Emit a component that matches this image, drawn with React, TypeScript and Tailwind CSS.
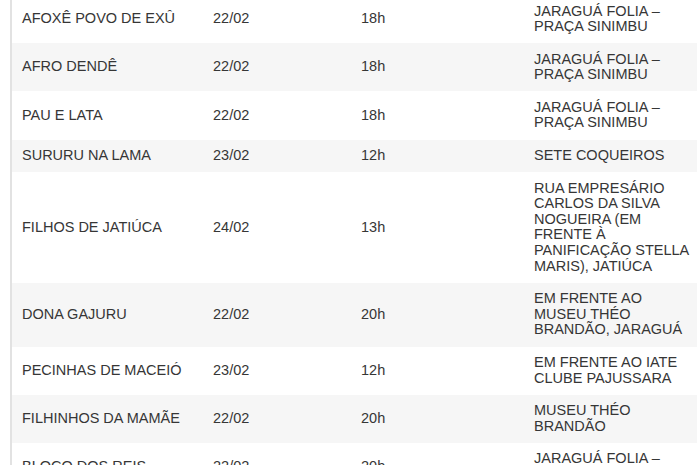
const rows = [
  { name: "AFOXÊ POVO DE EXÛ", date: "22/02", time: "18h", place: "JARAGUÁ FOLIA – PRAÇA SINIMBU" },
  { name: "AFRO DENDÊ", date: "22/02", time: "18h", place: "JARAGUÁ FOLIA – PRAÇA SINIMBU" },
  { name: "PAU E LATA", date: "22/02", time: "18h", place: "JARAGUÁ FOLIA – PRAÇA SINIMBU" },
  { name: "SURURU NA LAMA", date: "23/02", time: "12h", place: "SETE COQUEIROS" },
  {
    name: "FILHOS DE JATIÚCA",
    date: "24/02",
    time: "13h",
    place: "RUA EMPRESÁRIO CARLOS DA SILVA NOGUEIRA (EM FRENTE À PANIFICAÇÃO STELLA MARIS), JATIÚCA",
  },
  { name: "DONA GAJURU", date: "22/02", time: "20h", place: "EM FRENTE AO MUSEU THÉO BRANDÃO, JARAGUÁ" },
  { name: "PECINHAS DE MACEIÓ", date: "23/02", time: "12h", place: "EM FRENTE AO IATE CLUBE PAJUSSARA" },
  { name: "FILHINHOS DA MAMÃE", date: "22/02", time: "20h", place: "MUSEU THÉO BRANDÃO" },
  { name: "BLOCO DOS REIS", date: "22/02", time: "20h", place: "JARAGUÁ FOLIA – PRAÇA SINIMBU" },
];

export default function App() {
  return (
    <div className="w-[697px] h-[465px] overflow-hidden bg-white pl-[10px]">
      <div
        className="-mt-[5px] border-l-2 border-[#e2e2e2] text-[14.5px] leading-[15.6px] text-[#363636]"
        style={{ fontFamily: '"Liberation Sans", Arial, sans-serif' }}
      >
        {rows.map((r, i) => (
          <div
            key={i}
            className={`grid grid-cols-[191px_148px_173px_190px] items-center py-[8.5px] ${
              i % 2 === 1 ? "bg-[#f6f6f6]" : "bg-white"
            }`}
          >
            <div className="pl-[10px]">{r.name}</div>
            <div className="pl-[10px]">{r.date}</div>
            <div className="pl-[10px]">{r.time}</div>
            <div className="pl-[10px] w-[170px]">{r.place}</div>
          </div>
        ))}
      </div>
    </div>
  );
}
